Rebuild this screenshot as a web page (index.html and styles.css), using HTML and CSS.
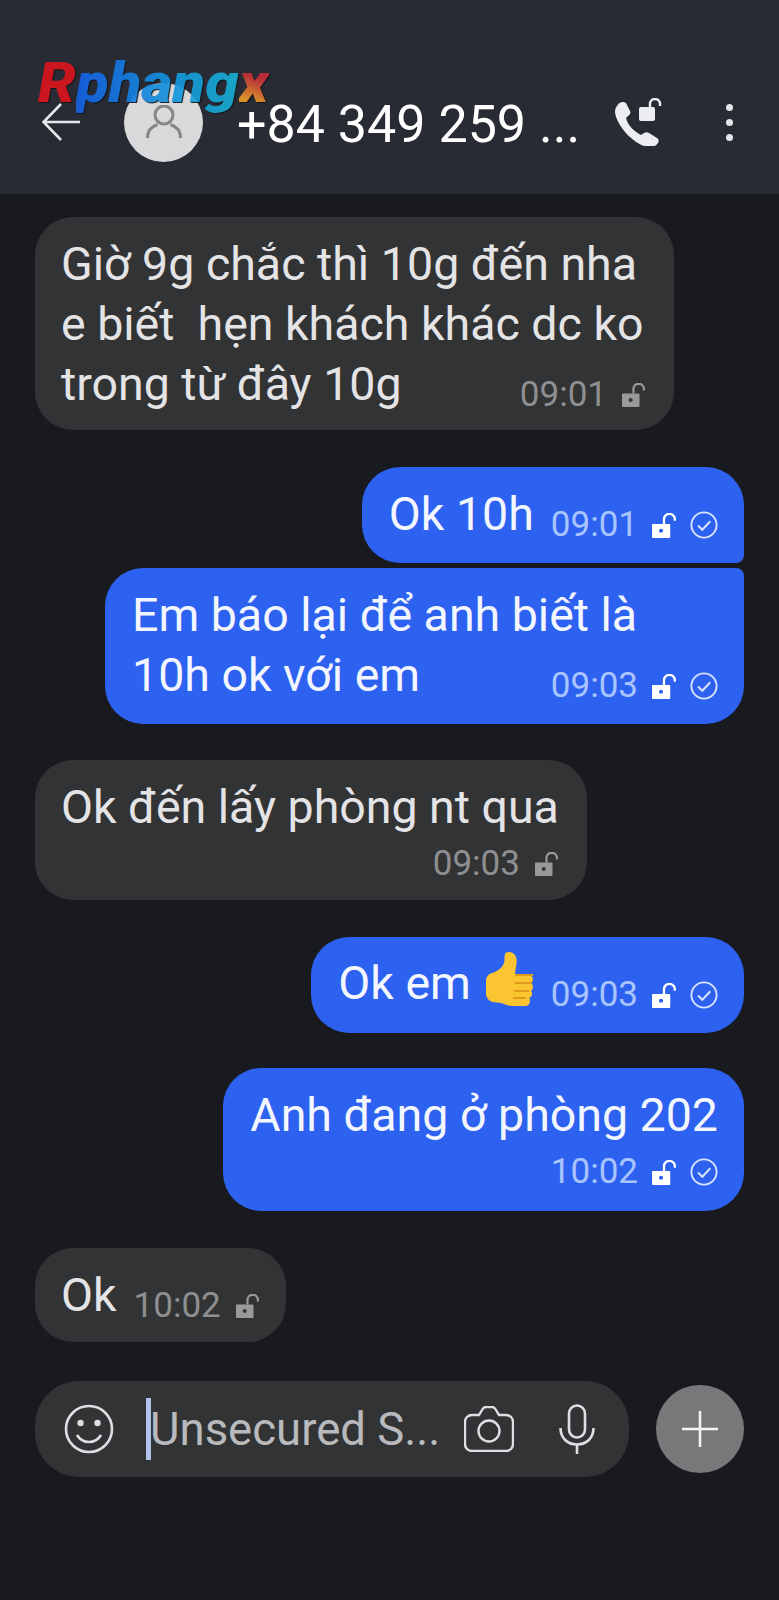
FILE: index.html
```html
<!DOCTYPE html>
<html lang="vi">
<head>
    <meta charset="UTF-8">
    <meta name="viewport" content="width=device-width, initial-scale=1.0">
    <title>+84 349 259</title>
    <link rel="stylesheet" href="styles.css">
</head>
<body>
    <svg class="defs" width="0" height="0">
        <symbol id="lock" viewBox="0 0 24 24">
            <path d="M1 10.500h15.500a1 1 0 0 1 1 1V23a1 1 0 0 1-1 1H1a1 1 0 0 1-1-1V11.500a1 1 0 0 1 1-1z" fill="currentColor"/>
            <path d="M11.500 10.500V6a5.200 5.200 0 0 1 10.400 0v1.500" fill="none" stroke="currentColor" stroke-width="2.200"/>
            <circle cx="8.700" cy="17" r="2" class="lock-hole"/>
        </symbol>
        <symbol id="check" viewBox="0 0 28 28">
            <circle cx="14" cy="14" r="12.600" fill="none" stroke="currentColor" stroke-width="1.900"/>
            <path d="M8 14.500l4.300 4.300 8-8.600" fill="none" stroke="currentColor" stroke-width="2"/>
        </symbol>
    </svg>

    <header class="topbar">
        <svg class="back" viewBox="0 0 38 38"><path d="M19 1L1.500 19 19 37M1.500 19H38" fill="none" stroke="#e6e7ea" stroke-width="2.600"/></svg>
        <div class="avatar">
            <svg viewBox="0 0 36 34" width="36" height="34"><circle cx="18" cy="10" r="9" fill="none" stroke="#858587" stroke-width="3"/><path d="M1.500 33c0-8 4-11.500 10-13.500M34.500 33c0-8-4-11.500-10-13.500" fill="none" stroke="#858587" stroke-width="3"/></svg>
        </div>
        <div class="title">+84 349 259 ...</div>
        <svg class="call" viewBox="0 0 48 48">
            <path d="M3 8c2-4 6-5 9-3l4 8c1 2 0 4-2 5l-2 2c2 8 8 13 15 17l3-2c2-1 3-1 5 0l8 5c2 1 2 4 1 5-2 3-6 5-10 4C18 46 2 26 1 14c0-3 1-5 2-6z" fill="#eceef2"/>
            <rect x="25" y="9" width="16" height="14" rx="2" fill="#eceef2"/>
            <path d="M36 9V6a5 5 0 0 1 10 0v2" fill="none" stroke="#eceef2" stroke-width="2.400"/>
        </svg>
        <div class="dots"><i></i><i></i><i></i></div>
        <div class="logo"><span class="logo-r">R</span><span class="logo-mid">phang</span><span class="logo-x">x</span></div>
    </header>

    <main class="messages">
        <div class="bubble in first">
            <div>Giờ 9g chắc thì 10g đến nha</div>
            <div>e biết&nbsp; hẹn khách khác dc ko</div>
            <div class="row">
                <span>trong từ đây 10g</span>
                <span class="meta"><span class="time">09:01</span><svg class="ic-lock"><use href="#lock"/></svg></span>
            </div>
        </div>

        <div class="bubble out gap single stacked-top">
            <div class="row">
                <span>Ok 10h</span>
                <span class="meta"><span class="time">09:01</span><svg class="ic-lock"><use href="#lock"/></svg><svg class="ic-check"><use href="#check"/></svg></span>
            </div>
        </div>
        <div class="bubble out stacked stacked-bottom">
            <div>Em báo lại để anh biết là</div>
            <div class="row">
                <span>10h ok với em</span>
                <span class="meta"><span class="time">09:03</span><svg class="ic-lock"><use href="#lock"/></svg><svg class="ic-check"><use href="#check"/></svg></span>
            </div>
        </div>

        <div class="bubble in tall">
            <div>Ok đến lấy phòng nt qua</div>
            <div class="row end">
                <span class="meta"><span class="time">09:03</span><svg class="ic-lock"><use href="#lock"/></svg></span>
            </div>
        </div>

        <div class="bubble out gap single">
            <div class="row">
                <span class="with-emoji">Ok em
                    <svg class="thumb" viewBox="0 0 50 55">
                        <path d="M2 30c0-4 2-7 6-8 6-2 10-5 12-10 1-4 0-6 1-9 1-3 9-3 11 3 2 6-1 12-1 18h13c3 0 5 2 5 4 0 2-1 3-2 4 1 1 2 2 2 4s-1 3-2 4c1 1 1 2 1 3 0 2-1 3-3 4 1 1 1 2 1 3 0 3-2 5-5 5H28c-5 0-7-2-11-3l-8-1c-4-1-7-4-7-9z" fill="#fbc531"/>
                        <path d="M31 24h18M31 32h17M30 40h15M29 47h13" stroke="#e29a1d" stroke-width="2" fill="none"/>
                    </svg>
                </span>
                <span class="meta"><span class="time">09:03</span><svg class="ic-lock"><use href="#lock"/></svg><svg class="ic-check"><use href="#check"/></svg></span>
            </div>
        </div>

        <div class="bubble out wide">
            <div>Anh đang ở phòng 202</div>
            <div class="row end">
                <span class="meta"><span class="time">10:02</span><svg class="ic-lock"><use href="#lock"/></svg><svg class="ic-check"><use href="#check"/></svg></span>
            </div>
        </div>

        <div class="bubble in gap last">
            <div class="row">
                <span>Ok</span>
                <span class="meta"><span class="time">10:02</span><svg class="ic-lock"><use href="#lock"/></svg></span>
            </div>
        </div>
    </main>

    <footer class="composer">
        <div class="input">
            <svg class="smile" viewBox="0 0 50 50">
                <circle cx="25" cy="25" r="23" fill="none" stroke="#dedfe2" stroke-width="2.600"/>
                <circle cx="16.500" cy="19" r="3.200" fill="#dedfe2"/>
                <circle cx="33.500" cy="19" r="3.200" fill="#dedfe2"/>
                <path d="M13 31c3 5 7 7 12 7s9-2 12-7" fill="none" stroke="#dedfe2" stroke-width="2.600"/>
            </svg>
            <span class="caret"></span>
            <span class="placeholder">Unsecured S...</span>
            <svg class="camera" viewBox="0 0 50 46">
                <path d="M8 9h7l3-5c1-2 2-3 4-3h6c2 0 3 1 4 3l3 5h7c4 0 7 3 7 7v22c0 4-3 7-7 7H8c-4 0-7-3-7-7V16c0-4 3-7 7-7z" fill="none" stroke="#dedfe2" stroke-width="2.400"/>
                <circle cx="25" cy="25" r="10.500" fill="none" stroke="#dedfe2" stroke-width="2.400"/>
            </svg>
            <svg class="mic" viewBox="0 0 36 50">
                <rect x="10" y="1.500" width="16" height="32" rx="8" fill="none" stroke="#dedfe2" stroke-width="2.600"/>
                <path d="M1.500 24c0 10 7 16.500 16.500 16.500S34.500 34 34.500 24M18 40.500V50" fill="none" stroke="#dedfe2" stroke-width="2.600"/>
            </svg>
        </div>
        <div class="plus">
            <svg viewBox="0 0 36 36" width="36" height="36"><path d="M18 0v36M0 18h36" stroke="#f2f2f2" stroke-width="2.600" fill="none"/></svg>
        </div>
    </footer>
</body>
</html>
```

FILE: styles.css
```css
* {
    box-sizing: border-box;
}

body {
    margin: 0;
    height: 1600px;
    overflow: hidden;
    background-color: #191a1f;
    color: #e8e8ea;
    font-family: Roboto, 'Liberation Sans', sans-serif;
}

.defs {
    position: absolute;
}

.topbar {
    position: relative;
    display: flex;
    align-items: center;
    height: 194px;
    padding: 50px 0 0 42px;
    background-color: #282b33;
}

.logo {
    position: absolute;
    left: 38px;
    top: 61px;
    font-family: Roboto, 'Liberation Sans', sans-serif;
    font-size: 55px;
    font-weight: 900;
    font-style: italic;
    line-height: 44px;
    white-space: nowrap;
    opacity: 0.92;
    filter: drop-shadow(1px 1px 0 #14151a);
    transform: scaleX(1.09);
    transform-origin: left center;
}

.logo-r {
    color: #d9141e;
}

.logo-mid {
    background: linear-gradient(90deg, #1560e4, #1596dc 60%, #17aed0);
    -webkit-background-clip: text;
    background-clip: text;
    color: transparent;
}

.logo-x {
    background: linear-gradient(200deg, #c42a3a 40%, #e89a2a 75%);
    -webkit-background-clip: text;
    background-clip: text;
    color: transparent;
}

.back {
    width: 38px;
    height: 38px;
}

.avatar {
    display: flex;
    align-items: center;
    justify-content: center;
    width: 79px;
    height: 79px;
    margin-left: 44px;
    border-radius: 50%;
    background-color: #d9d9db;
}

.title {
    margin: 5px 0 0 34px;
    width: 343px;
    font-size: 52px;
    line-height: 38px;
    color: #fff;
    white-space: nowrap;
}

.call {
    width: 48px;
    height: 48px;
    margin-left: 34px;
}

.dots {
    display: flex;
    flex-direction: column;
    gap: 8px;
    margin-left: 64px;
}

.dots i {
    display: block;
    width: 7px;
    height: 7px;
    border-radius: 50%;
    background-color: #e6e7ea;
}

.messages {
    display: flex;
    flex-direction: column;
    padding: 23px 35px 0;
}

.bubble {
    padding: 17px 28px 0 26px;
    font-size: 46.5px;
    line-height: 60px;
    white-space: nowrap;
}

.bubble.in {
    align-self: flex-start;
    background-color: #323335;
    color: #e4e4e6;
    border-radius: 38px;
}

.bubble.out {
    align-self: flex-end;
    padding-left: 27px;
    padding-right: 26px;
    background-color: #2d62f0;
    color: #f3f6ff;
    border-radius: 38px;
}

.bubble.first {
    width: 639px;
    height: 213px;
}

.bubble.gap {
    margin-top: 37px;
}

.bubble.single {
    height: 96px;
}

.bubble.stacked {
    width: 639px;
    height: 156px;
    margin-top: 5px;
}

.stacked-top {
    border-bottom-right-radius: 8px !important;
}

.stacked-bottom {
    border-top-right-radius: 8px !important;
}

.bubble.tall {
    height: 140px;
    margin-top: 36px;
}

.bubble.wide {
    height: 143px;
    margin-top: 35px;
}

.bubble.last {
    height: 94px;
    padding-right: 26px;
}

.row {
    display: flex;
    align-items: flex-end;
    justify-content: space-between;
    height: 60px;
}

.row.end {
    justify-content: flex-end;
    margin-top: -14px;
}

.meta {
    display: flex;
    align-items: center;
    height: 50px;
    margin: 0 0 -6px 17px;
    font-size: 35px;
    line-height: 50px;
}

.in .meta {
    color: #8e8f91;
}

.out .meta {
    color: #a9c4ff;
}

.ic-lock {
    width: 24px;
    height: 24px;
    margin-left: 15px;
}

.in .ic-lock {
    color: #98999b;
    --hole: #323335;
}

.out .ic-lock {
    width: 25px;
    height: 25px;
    margin-left: 14px;
    color: #fff;
    --hole: #2d62f0;
}

.lock-hole {
    fill: var(--hole);
}

.ic-check {
    width: 28px;
    height: 28px;
    margin-left: 13px;
    color: #d8e3ff;
}

.with-emoji {
    display: flex;
    align-items: center;
    gap: 13px;
}

.thumb {
    width: 50px;
    height: 55px;
    margin-bottom: 8px;
}

.composer {
    display: flex;
    align-items: center;
    gap: 27px;
    padding: 39px 35px 0;
}

.input {
    display: flex;
    align-items: center;
    width: 594px;
    height: 96px;
    padding-left: 29px;
    border-radius: 44px;
    background-color: #323335;
}

.smile {
    width: 50px;
    height: 50px;
}

.caret {
    width: 5px;
    height: 62px;
    margin-left: 32px;
    background-color: #b4c2ee;
}

.placeholder {
    width: 313px;
    margin-left: -1px;
    padding-right: 0;
    font-size: 45.5px;
    color: #b9babd;
    white-space: nowrap;
}

.camera {
    width: 50px;
    height: 46px;
    margin-left: 1px;
}

.mic {
    width: 36px;
    height: 50px;
    margin-left: 45px;
}

.plus {
    display: flex;
    align-items: center;
    justify-content: center;
    width: 88px;
    height: 88px;
    border-radius: 50%;
    background-color: #777879;
}
```
